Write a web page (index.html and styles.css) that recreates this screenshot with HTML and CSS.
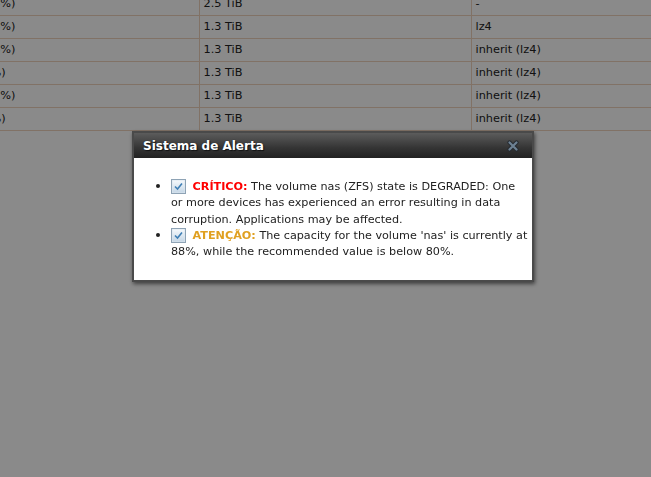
FILE: index.html
```html
<!DOCTYPE html>
<html lang="pt">
<head>
<meta charset="utf-8">
<title>Volumes</title>
<link rel="stylesheet" href="styles.css">
</head>
<body>
<table class="volumes">
  <colgroup><col class="c-used"><col class="c-avail"><col class="c-comp"><col class="c-ratio"></colgroup>
  <tr><td>2.2 TiB (88%)</td><td>2.5 TiB</td><td>-</td><td></td></tr>
  <tr><td>2.2 TiB (88%)</td><td>1.3 TiB</td><td>lz4</td><td></td></tr>
  <tr><td>1.8 TiB (58%)</td><td>1.3 TiB</td><td>inherit (lz4)</td><td></td></tr>
  <tr><td>96 KiB (0%)</td><td>1.3 TiB</td><td>inherit (lz4)</td><td></td></tr>
  <tr><td>1.5 TiB (12%)</td><td>1.3 TiB</td><td>inherit (lz4)</td><td></td></tr>
  <tr><td>96 KiB (0%)</td><td>1.3 TiB</td><td>inherit (lz4)</td><td></td></tr>
</table>

<div class="overlay"></div>

<div class="dialog" role="dialog" aria-labelledby="alert-title">
  <div class="dialog-head">
    <span id="alert-title" class="dialog-title">Sistema de Alerta</span>
    <svg class="dialog-close" width="12" height="12" viewBox="0 0 12 12" aria-label="Fechar">
      <path d="M2.5 2.5 L9.5 9.5 M9.5 2.5 L2.5 9.5" stroke="#262b31" stroke-width="4.2" stroke-linecap="round"/>
      <path d="M2.5 2.5 L9.5 9.5 M9.5 2.5 L2.5 9.5" stroke="#6d8193" stroke-width="2.2" stroke-linecap="round"/>
    </svg>
  </div>
  <div class="dialog-body">
    <ul class="alerts">
      <li>
        <span class="ack"><svg width="15" height="15" viewBox="0 0 15 15"><defs><linearGradient id="g" x1="0" y1="0" x2="0" y2="1"><stop offset="0" stop-color="#f4f8fb"/><stop offset="1" stop-color="#c6d7e6"/></linearGradient></defs><rect x="0.5" y="0.5" width="14" height="14" fill="#dbe6ef" stroke="#8ea3b5"/><rect x="1.5" y="1.5" width="12" height="12" fill="url(#g)"/><path d="M4 7.5 L6.5 10 L11 4.5" fill="none" stroke="#3f7fb5" stroke-width="1.6"/></svg></span>
        <span class="level crit">CRÍTICO:</span> The volume nas (ZFS) state is DEGRADED: One or more devices has experienced an error resulting in data corruption. Applications may be affected.
      </li>
      <li>
        <span class="ack"><svg width="15" height="15" viewBox="0 0 15 15"><rect x="0.5" y="0.5" width="14" height="14" fill="#dbe6ef" stroke="#8ea3b5"/><rect x="1.5" y="1.5" width="12" height="12" fill="url(#g)"/><path d="M4 7.5 L6.5 10 L11 4.5" fill="none" stroke="#3f7fb5" stroke-width="1.6"/></svg></span>
        <span class="level warn">ATENÇÃO:</span> The capacity for the volume 'nas' is currently at 88%, while the recommended value is below 80%.
      </li>
    </ul>
  </div>
</div>
</body>
</html>
```

FILE: styles.css
```css
html, body {
  margin: 0;
  padding: 0;
  background: #fff;
  overflow: hidden;
  height: 100%;
  font-family: "DejaVu Sans", Verdana, sans-serif;
}

/* volume list behind the modal */
.volumes {
  border-collapse: collapse;
  table-layout: fixed;
  width: 856px;
  margin: -7px 0 0 -65px;
  font-size: 11.3px;
  color: #222;
}
.c-used { width: 264px; }
.c-avail { width: 272px; }
.c-comp { width: 200px; }
.c-ratio { width: 120px; }

.volumes td {
  height: 14px;
  line-height: 14px;
  padding: 4px 3px 4px 4px;
  border-bottom: 1px solid #eed3bd;
  border-right: 1px solid #eed3bd;
  white-space: nowrap;
  overflow: hidden;
}

/* dimmed backdrop */
.overlay {
  position: fixed;
  inset: 0;
  background: rgba(0, 0, 0, 0.46);
}

/* alert dialog */
.dialog {
  position: fixed;
  left: 132px;
  top: 131px;
  width: 398px;
  border: 2px solid #4a4a4a;
  background: #fff;
  box-shadow: 1px 2px 4px rgba(0, 0, 0, 0.55);
}

.dialog-head {
  height: 25px;
  display: flex;
  align-items: center;
  justify-content: space-between;
  padding: 0 13px 0 9px;
  background: linear-gradient(#5c5c5c, #343434 60%, #222);
}

.dialog-title {
  color: #fff;
  font-weight: bold;
  font-size: 12px;
  text-shadow: 0 0 1px #1a2630, 1px 1px 1px #111;
}

.dialog-close { display: block; }

.dialog-body {
  padding: 21px 3px 20px 10px;
}

.alerts {
  margin: 0;
  padding-left: 27px;
  font-size: 11.2px;
  line-height: 16.3px;
  color: #222;
}

.alerts li::marker {
  font-size: 13px;
  line-height: 1;
}

.ack {
  display: inline-block;
  vertical-align: -4px;
  margin-right: 3px;
}
.ack svg { display: block; }

.level { font-weight: bold; }
.crit { color: #ff0000; }
.warn { color: #e0a020; }
```
